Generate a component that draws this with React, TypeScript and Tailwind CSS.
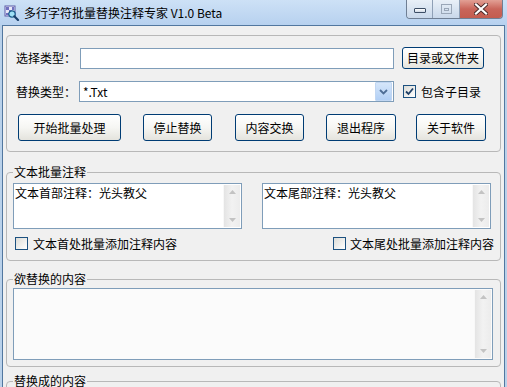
const fontCls = "font-['SimSun','Noto_Sans_CJK_SC','Liberation_Sans',sans-serif]";

function AppIcon() {
  return (
    <svg width="16" height="16" viewBox="0 0 16 16">
      <rect x="1" y="1" width="10" height="10" fill="#e8e8f8" stroke="#5c5ca8" strokeWidth="1" />
      <rect x="2" y="2" width="3" height="3" fill="#7070c0" />
      <rect x="5" y="5" width="3" height="3" fill="#7070c0" />
      <rect x="8" y="2" width="2" height="3" fill="#7070c0" />
      <rect x="2" y="8" width="3" height="2" fill="#7070c0" />
      <circle cx="8" cy="9" r="3.2" fill="#9fe0f5" stroke="#1a5d8a" strokeWidth="1.2" />
      <path d="M10.3 11.3 L14 15" stroke="#1a3f6a" strokeWidth="2.2" strokeLinecap="round" />
    </svg>
  );
}

function TitleBar() {
  return (
    <div className="h-[25px] flex items-start bg-gradient-to-b from-[#cde1f6] to-[#b7d1ef]">
      <div className="ml-[4px] mt-[5px]">
        <AppIcon />
      </div>
      <div className="ml-[4px] mt-[5px] text-[12px] leading-[16px] text-black whitespace-nowrap">
        多行字符批量替换注释专家 V1.0 Beta
      </div>
      <div className="flex-1" />
      <div className="flex mr-[4px] h-[19px] rounded-b-[4px] border border-t-0 border-[#6f7f94] overflow-hidden">
        <div className="w-[26px] flex items-center justify-center bg-gradient-to-b from-[#e9f0f8] to-[#c9d8ea] border-r border-[#8fa0b6]">
          <div className="w-[12px] h-[5px] mt-[2px] rounded-[1px] border border-[#3d4e66] bg-gradient-to-b from-white to-[#cfd8e4]" />
        </div>
        <div className="w-[27px] flex items-center justify-center bg-gradient-to-b from-[#e9f0f8] to-[#c9d8ea] border-r border-[#8fa0b6]">
          <div className="w-[11px] h-[10px] border border-[#9aa7b8] flex items-center justify-center">
            <div className="w-[5px] h-[3px] border border-[#9aa7b8]" />
          </div>
        </div>
        <div className="w-[42px] flex items-center justify-center bg-gradient-to-b from-[#e2a095] via-[#c9655a] to-[#c35c4f]">
          <svg width="14" height="12" viewBox="0 0 14 12">
            <path d="M2 1.5 L12 10.5 M12 1.5 L2 10.5" stroke="#4a2a2a" strokeWidth="4" strokeLinecap="square" />
            <path d="M2 1.5 L12 10.5 M12 1.5 L2 10.5" stroke="#ffffff" strokeWidth="2.2" strokeLinecap="square" />
          </svg>
        </div>
      </div>
    </div>
  );
}

function WinButton({ label, w, className = "" }: { label: string; w: string; className?: string }) {
  return (
    <button
      type="button"
      className={`${w} h-full shrink-0 rounded-[3px] border border-[#003c74] bg-gradient-to-b from-white via-[#f6f6f3] to-[#e4e3dd] text-[12px] text-black ${className}`}
    >
      {label}
    </button>
  );
}

function CheckBox({ checked }: { checked?: boolean }) {
  return (
    <div className="w-[13px] h-[13px] shrink-0 border border-[#1c5180] bg-gradient-to-br from-[#dcdcd7] to-white flex items-center justify-center">
      {checked && (
        <svg width="9" height="9" viewBox="0 0 9 9">
          <path d="M1 4.5 L3.5 7 L8 1.5" fill="none" stroke="#1f3f66" strokeWidth="1.8" />
        </svg>
      )}
    </div>
  );
}

function ScrollBar() {
  return (
    <div className="w-[17px] h-full shrink-0 flex flex-col items-center justify-between py-[5px] bg-gradient-to-r from-[#e4e4e4] via-[#f2f2f2] to-[#ececec] border-l border-[#f8f8f8]">
      <svg width="7" height="4" viewBox="0 0 7 4">
        <path d="M0 4 L3.5 0 L7 4 Z" fill="#c3c3c3" />
      </svg>
      <svg width="7" height="4" viewBox="0 0 7 4">
        <path d="M0 0 L3.5 4 L7 0 Z" fill="#c3c3c3" />
      </svg>
    </div>
  );
}

function Memo({ text, w, h, bg = "bg-white", className = "" }: { text?: string; w: string; h: string; bg?: string; className?: string }) {
  return (
    <div className={`${w} ${h} shrink-0 border border-[#7f9db9] ${bg} flex ${className}`}>
      <div className="flex-1 px-[1px] pt-[2px] text-[12px] leading-[14px] whitespace-nowrap">{text}</div>
      <div className="py-[1px] pr-[1px] h-full">
        <ScrollBar />
      </div>
    </div>
  );
}

function Group({ title, className = "", children }: { title: string; className?: string; children?: React.ReactNode }) {
  return (
    <fieldset className={`border border-[#b8b8b8] rounded-[4px] p-0 m-0 min-w-0 ${className}`}>
      <legend className="ml-[6px] px-[1px] text-[12px] leading-[16px]">{title}</legend>
      {children}
    </fieldset>
  );
}

export default function App() {
  return (
    <div className={`w-[507px] h-[387px] overflow-hidden bg-[#b9d1ea] flex flex-col text-[12px] leading-[16px] text-black ${fontCls}`}>
      <TitleBar />
      <div className="flex-1 mx-[2px] border-x border-t border-[#52779f] bg-[#f0f0f0] px-[3px] pt-[9px] overflow-hidden">
        {/* top settings */}
        <div className="border border-[#b8b8b8] rounded-[4px] pt-[11px] pb-[10px]">
          <div className="flex items-center h-[22px] pl-[9px]">
            <span className="w-[64px] shrink-0">选择类型：</span>
            <div className="w-[314px] h-[21px] shrink-0 border border-[#7f9db9] bg-white" />
            <WinButton label="目录或文件夹" w="w-[82px]" className="ml-[8px]" />
          </div>
          <div className="flex items-center h-[21px] mt-[12px] pl-[9px]">
            <span className="w-[63px] shrink-0">替换类型：</span>
            <div className="w-[315px] h-[21px] shrink-0 border border-[#7f9db9] bg-white flex items-center">
              <span className="flex-1 pl-[3px] leading-[14px]">*.Txt</span>
              <div className="w-[17px] h-[19px] mr-[1px] rounded-[1px] bg-gradient-to-b from-[#d5e6fa] to-[#b1cff5] border border-[#c0d6f2] flex items-center justify-center">
                <svg width="9" height="6" viewBox="0 0 9 6">
                  <path d="M1 1 L4.5 4.5 L8 1" fill="none" stroke="#4d6d96" strokeWidth="1.8" />
                </svg>
              </div>
            </div>
            <div className="ml-[9px]">
              <CheckBox checked />
            </div>
            <span className="ml-[5px]">包含子目录</span>
          </div>
          <div className="flex h-[27px] mt-[12px] pl-[11px]">
            <WinButton label="开始批量处理" w="w-[103px]" />
            <WinButton label="停止替换" w="w-[69px]" className="ml-[22px]" />
            <WinButton label="内容交换" w="w-[69px]" className="ml-[23px]" />
            <WinButton label="退出程序" w="w-[70px]" className="ml-[22px]" />
            <WinButton label="关于软件" w="w-[70px]" className="ml-[20px]" />
          </div>
        </div>

        <Group title="文本批量注释" className="mt-[12px] pb-[10px]">
          <div className="flex mt-[3px] pl-[6px]">
            <Memo text="文本首部注释：光头教父" w="w-[229px]" h="h-[46px]" />
            <Memo text="文本尾部注释：光头教父" w="w-[229px]" h="h-[46px]" className="ml-[20px]" />
          </div>
          <div className="flex items-center justify-between h-[13px] mt-[8px] pl-[8px] pr-[6px]">
            <div className="flex items-center">
              <CheckBox />
              <span className="ml-[5px]">文本首处批量添加注释内容</span>
            </div>
            <div className="flex items-center">
              <CheckBox />
              <span className="ml-[4px]">文本尾处批量添加注释内容</span>
            </div>
          </div>
        </Group>

        <Group title="欲替换的内容" className="mt-[10px] pb-[6px]">
          <div className="mt-[1px] pl-[6px] pr-[7px]">
            <Memo w="w-full" h="h-[72px]" bg="bg-[#fbfbfb]" />
          </div>
        </Group>

        <Group title="替换成的内容" className="mt-[6px] h-[60px]" />
      </div>
    </div>
  );
}
